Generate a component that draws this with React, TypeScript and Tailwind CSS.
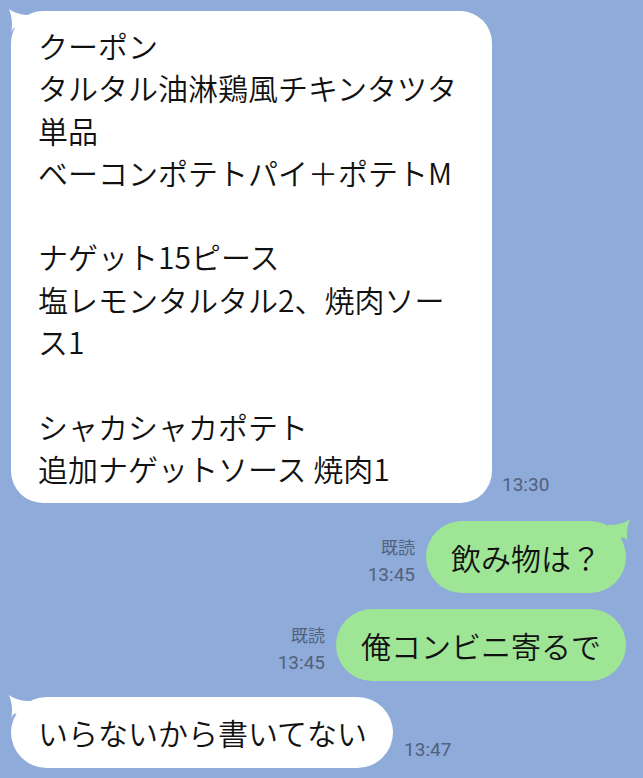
import React from "react";

const jp = "font-['Noto_Sans_CJK_JP','Noto_Sans',sans-serif]";

const LeftTail = () => (
  <svg className="absolute left-[-2px] top-[-2px]" width="26" height="26" viewBox="0 0 26 26">
    <path d="M0 0 C6 4 12 6 22 6 L22 24 C10 20 5 14 2 24 C4 16 3 8 0 0 Z" fill="#ffffff" />
  </svg>
);

const RightTail = () => (
  <svg className="absolute right-[-4px] top-[-2px]" width="26" height="26" viewBox="0 0 26 26">
    <path d="M26 0 C20 4 14 6 4 6 L4 24 C16 20 21 14 24 24 C22 16 23 8 26 0 Z" fill="#9ee596" />
  </svg>
);

const Time = ({ t, read }: { t: string; read?: boolean }) => (
  <div className="flex flex-col items-end text-[#52617c] leading-[28px] pb-[4px]">
    {read && <span className={`${jp} text-[17px]`}>既読</span>}
    <span className="font-['Roboto',sans-serif] text-[19px]">{t}</span>
  </div>
);

const coupon = `クーポン
タルタル油淋鶏風チキンタツタ
単品
ベーコンポテトパイ＋ポテトM

ナゲット15ピース
塩レモンタルタル2、焼肉ソース1

シャカシャカポテト
追加ナゲットソース 焼肉1`;

const msg = `${jp} font-[350] relative text-[30px] text-[#111]`;

export default function App() {
  return (
    <div className="w-[643px] h-[778px] bg-[#8eabd9] overflow-hidden pt-[11px] flex flex-col">
      {/* received long message */}
      <div className="flex items-end pl-[11px] gap-[10px]">
        <div className="relative bg-white rounded-[32px] w-[481px] pl-[27px] pr-[26px] pt-[13px] pb-[14px]">
          <LeftTail />
          <p className={`${msg} leading-[42.3px] whitespace-pre-wrap break-all`}>{coupon}</p>
        </div>
        <Time t="13:30" />
      </div>

      {/* sent */}
      <div className="flex items-end justify-end pr-[17px] gap-[11px] mt-[18px]">
        <Time t="13:45" read />
        <div className="relative bg-[#9ee596] rounded-full h-[72px] px-[25px] flex items-center">
          <RightTail />
          <span className={msg}>飲み物は？</span>
        </div>
      </div>

      <div className="flex items-end justify-end pr-[17px] gap-[11px] mt-[16px]">
        <Time t="13:45" read />
        <div className="relative bg-[#9ee596] rounded-full h-[72px] px-[25px] flex items-center">
          <span className={msg}>俺コンビニ寄るで</span>
        </div>
      </div>

      {/* received short */}
      <div className="flex items-end pl-[11px] gap-[11px] mt-[16px]">
        <div className="relative bg-white rounded-full h-[71px] pl-[27px] pr-[26px] flex items-center">
          <LeftTail />
          <span className={msg}>いらないから書いてない</span>
        </div>
        <Time t="13:47" />
      </div>
    </div>
  );
}
